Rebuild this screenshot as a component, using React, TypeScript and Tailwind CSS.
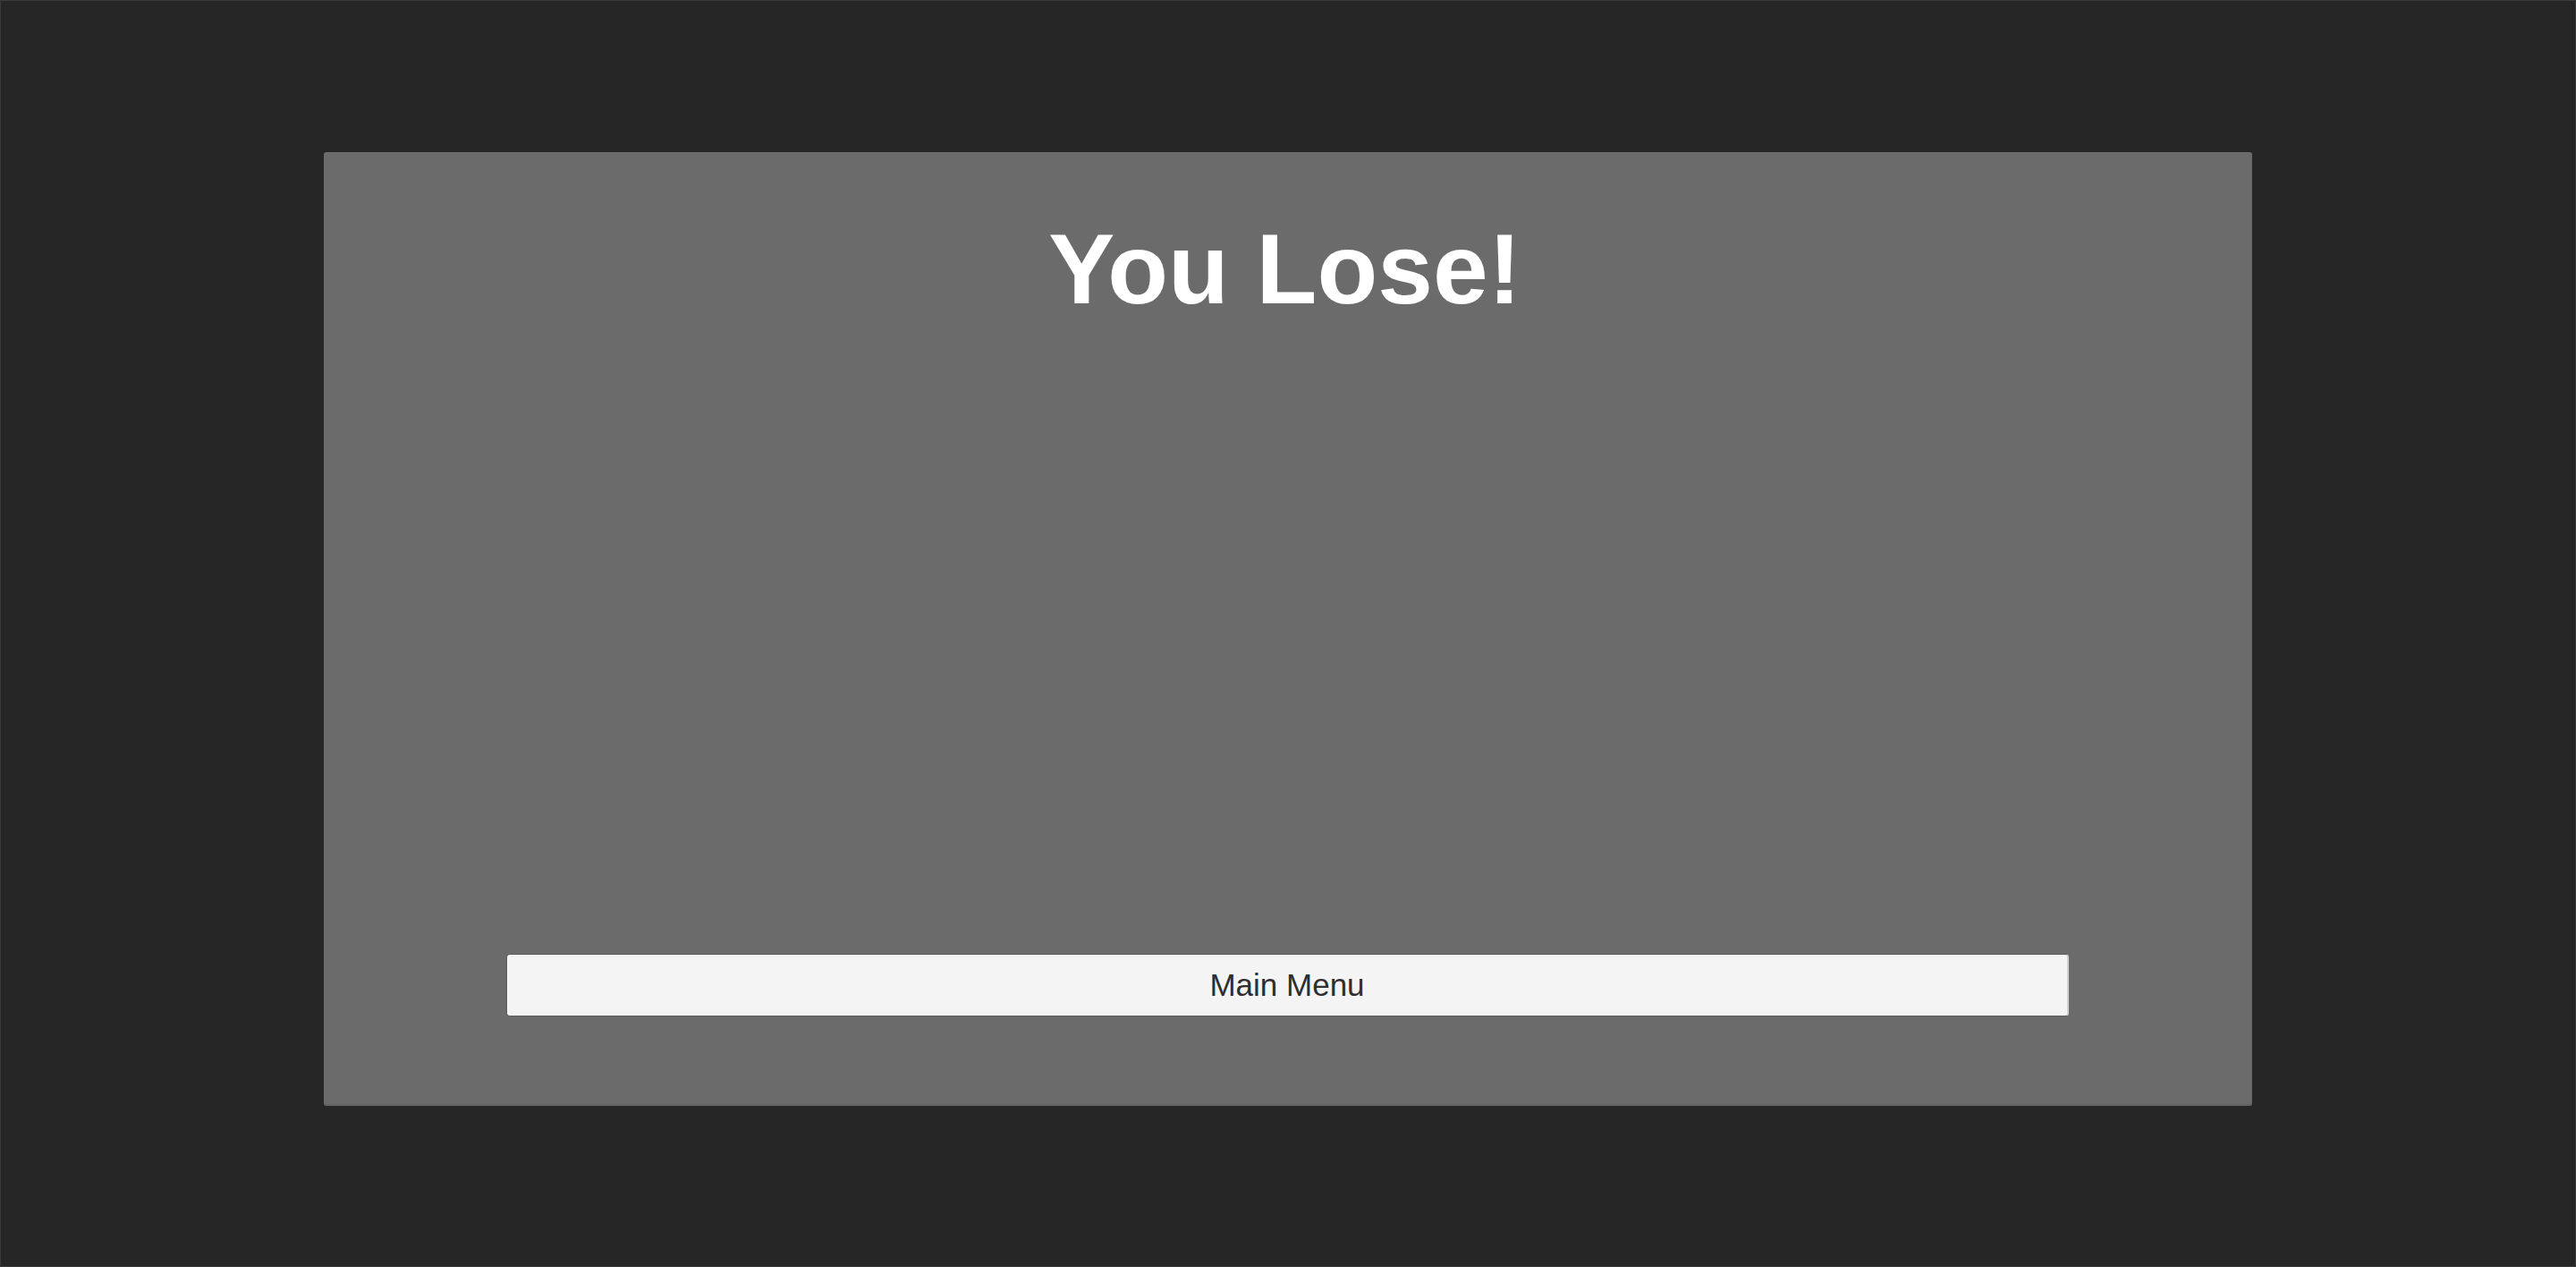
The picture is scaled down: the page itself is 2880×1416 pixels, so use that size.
export default function App() {
  return (
    <div
      className="w-[2880px] h-[1416px] bg-[#262626] border border-[#3a3a3a] flex justify-center pt-[169px]"
      style={{ fontFamily: '"Liberation Sans", Arial, sans-serif' }}
    >
      <div className="w-[2156px] h-[1066px] bg-[#6b6b6b] rounded-[3px] border-b-2 border-r border-[#626262] flex flex-col px-[204px]">
        <div className="flex justify-center pt-[76px] pr-[6px]">
          <h1 className="text-[111px] leading-none font-bold text-white whitespace-nowrap">
            You Lose!
          </h1>
        </div>
        <div className="flex-1" />
        <button className="h-[70px] w-full bg-[#f4f4f4] rounded-[4px] border border-[#5c5c5c] border-r-2 border-r-[#cfcfcf] text-[35px] text-[#2e2e2e] flex items-center justify-center mb-[98px]">
          Main Menu
        </button>
      </div>
    </div>
  );
}
